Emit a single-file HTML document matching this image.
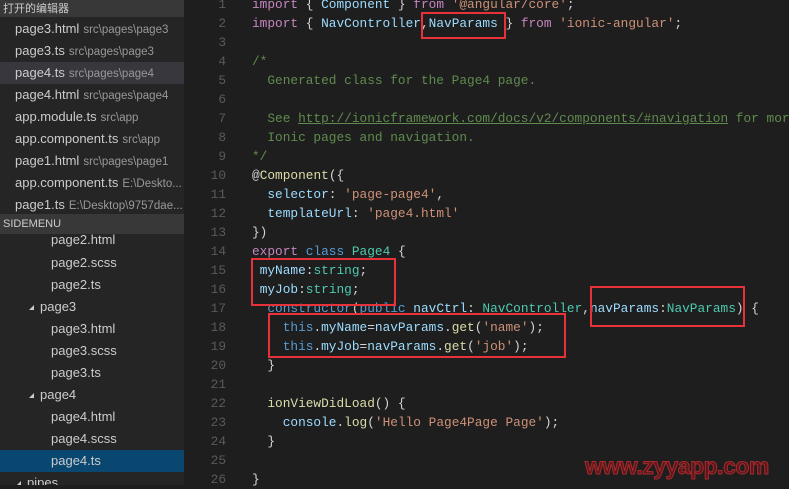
<!DOCTYPE html>
<html><head><meta charset="utf-8">
<style>
*{margin:0;padding:0;box-sizing:border-box}
body{width:789px;height:485px;overflow:hidden;background:#1e1e1e;position:relative;font-family:"Liberation Sans","Noto Sans CJK SC",sans-serif}
#side{position:absolute;left:0;top:0;width:184px;height:485px;background:#252526;overflow:hidden}
.hdr{position:absolute;left:0;width:184px;height:18px;background:#383838;color:#ccc;font-size:11px;line-height:18px;padding-left:3px}
.row{position:absolute;left:0;width:184px;height:22px;line-height:22px;color:#ccc;font-size:13px;white-space:nowrap;overflow:hidden}
.row .d{color:#999;font-size:11.5px;margin-left:4px}
.sel{background:#37373d}
.act{background:#094771}
.tri{display:inline-block;width:0;height:0;border-left:5px solid transparent;border-bottom:5px solid #ccc;margin-right:6px;vertical-align:1px}
#code{position:absolute;left:184px;top:-5px;width:605px}
.ln{position:absolute;left:0;width:42px;text-align:right;color:#5a5a5a;font:12.8px/19px "Liberation Mono",monospace}
.cl{position:absolute;left:68px;white-space:pre;color:#d4d4d4;font:12.8px/19px "Liberation Mono",monospace}
.k{color:#c586c0}.b{color:#569cd6}.v{color:#9cdcfe}.t{color:#4ec9b0}.s{color:#ce9178}.c{color:#608b4e}.f{color:#dcdcaa}.u{text-decoration:underline}
.box{position:absolute;border:2px solid #e8323a}
#wm{position:absolute;left:585px;top:453px;font:bold 23px "Liberation Sans",sans-serif;color:#5e1719;-webkit-text-stroke:1px #a82a2e;letter-spacing:-0.5px}
</style></head><body>
<div id="side">
<div class="hdr" style="top:0;height:17px">打开的编辑器</div>
<div class="row" style="top:18px;padding-left:15px">page3.html<span class="d">src\pages\page3</span></div>
<div class="row" style="top:40px;padding-left:15px">page3.ts<span class="d">src\pages\page3</span></div>
<div class="row sel" style="top:62px;padding-left:15px">page4.ts<span class="d">src\pages\page4</span></div>
<div class="row" style="top:84px;padding-left:15px">page4.html<span class="d">src\pages\page4</span></div>
<div class="row" style="top:106px;padding-left:15px">app.module.ts<span class="d">src\app</span></div>
<div class="row" style="top:128px;padding-left:15px">app.component.ts<span class="d">src\app</span></div>
<div class="row" style="top:150px;padding-left:15px">page1.html<span class="d">src\pages\page1</span></div>
<div class="row" style="top:172px;padding-left:15px">app.component.ts<span class="d">E:\Deskto...</span></div>
<div class="row" style="top:194px;padding-left:15px">page1.ts<span class="d">E:\Desktop\9757dae...</span></div>
<div class="row" style="top:229px;padding-left:51px">page2.html</div>
<div class="hdr" style="top:214px;height:20px;line-height:20px">SIDEMENU</div>
<div class="row" style="top:252px;padding-left:51px">page2.scss</div>
<div class="row" style="top:274px;padding-left:51px">page2.ts</div>
<div class="row" style="top:296px;padding-left:29px"><span class="tri"></span>page3</div>
<div class="row" style="top:318px;padding-left:51px">page3.html</div>
<div class="row" style="top:340px;padding-left:51px">page3.scss</div>
<div class="row" style="top:362px;padding-left:51px">page3.ts</div>
<div class="row" style="top:384px;padding-left:29px"><span class="tri"></span>page4</div>
<div class="row" style="top:406px;padding-left:51px">page4.html</div>
<div class="row" style="top:428px;padding-left:51px">page4.scss</div>
<div class="row act" style="top:450px;padding-left:51px;height:22px">page4.ts</div>
<div class="row" style="top:472px;padding-left:16px"><span class="tri"></span>pipes</div>
</div>
<div id="code">
<div class="ln" style="top:0">1</div><div class="cl" style="top:0"><span class="k">import</span> { <span class="v">Component</span> } <span class="k">from</span> <span class="s">'@angular/core'</span>;</div>
<div class="ln" style="top:19px">2</div><div class="cl" style="top:19px"><span class="k">import</span> { <span class="v">NavController</span>,<span class="v">NavParams</span> } <span class="k">from</span> <span class="s">'ionic-angular'</span>;</div>
<div class="ln" style="top:38px">3</div>
<div class="ln" style="top:57px">4</div><div class="cl c" style="top:57px">/*</div>
<div class="ln" style="top:76px">5</div><div class="cl c" style="top:76px">  Generated class for the Page4 page.</div>
<div class="ln" style="top:95px">6</div>
<div class="ln" style="top:114px">7</div><div class="cl c" style="top:114px">  See <span class="u">http://ionicframework.com/docs/v2/components/#navigation</span> for more</div>
<div class="ln" style="top:133px">8</div><div class="cl c" style="top:133px">  Ionic pages and navigation.</div>
<div class="ln" style="top:152px">9</div><div class="cl c" style="top:152px">*/</div>
<div class="ln" style="top:171px">10</div><div class="cl" style="top:171px">@<span class="f">Component</span>({</div>
<div class="ln" style="top:190px">11</div><div class="cl" style="top:190px">  <span class="v">selector</span>: <span class="s">'page-page4'</span>,</div>
<div class="ln" style="top:209px">12</div><div class="cl" style="top:209px">  <span class="v">templateUrl</span>: <span class="s">'page4.html'</span></div>
<div class="ln" style="top:228px">13</div><div class="cl" style="top:228px">})</div>
<div class="ln" style="top:247px">14</div><div class="cl" style="top:247px"><span class="k">export</span> <span class="b">class</span> <span class="t">Page4</span> {</div>
<div class="ln" style="top:266px">15</div><div class="cl" style="top:266px"> <span class="v">myName</span>:<span class="t">string</span>;</div>
<div class="ln" style="top:285px">16</div><div class="cl" style="top:285px"> <span class="v">myJob</span>:<span class="t">string</span>;</div>
<div class="ln" style="top:304px">17</div><div class="cl" style="top:304px">  <span class="b">constructor</span>(<span class="b">public</span> <span class="v">navCtrl</span>: <span class="t">NavController</span>,<span class="v">navParams</span>:<span class="t">NavParams</span>) {</div>
<div class="ln" style="top:323px">18</div><div class="cl" style="top:323px">    <span class="b">this</span>.<span class="v">myName</span>=<span class="v">navParams</span>.<span class="f">get</span>(<span class="s">'name'</span>);</div>
<div class="ln" style="top:342px">19</div><div class="cl" style="top:342px">    <span class="b">this</span>.<span class="v">myJob</span>=<span class="v">navParams</span>.<span class="f">get</span>(<span class="s">'job'</span>);</div>
<div class="ln" style="top:361px">20</div><div class="cl" style="top:361px">  }</div>
<div class="ln" style="top:380px">21</div>
<div class="ln" style="top:399px">22</div><div class="cl" style="top:399px">  <span class="f">ionViewDidLoad</span>() {</div>
<div class="ln" style="top:418px">23</div><div class="cl" style="top:418px">    <span class="v">console</span>.<span class="f">log</span>(<span class="s">'Hello Page4Page Page'</span>);</div>
<div class="ln" style="top:437px">24</div><div class="cl" style="top:437px">  }</div>
<div class="ln" style="top:456px">25</div>
<div class="ln" style="top:475px">26</div><div class="cl" style="top:475px">}</div>
</div>
<div class="box" style="left:421px;top:12px;width:85px;height:27px"></div>
<div class="box" style="left:251px;top:258px;width:145px;height:48px"></div>
<div class="box" style="left:590px;top:286px;width:155px;height:41px"></div>
<div class="box" style="left:268px;top:313px;width:298px;height:45px"></div>
<div id="wm">www.zyyapp.com</div>
</body></html>
